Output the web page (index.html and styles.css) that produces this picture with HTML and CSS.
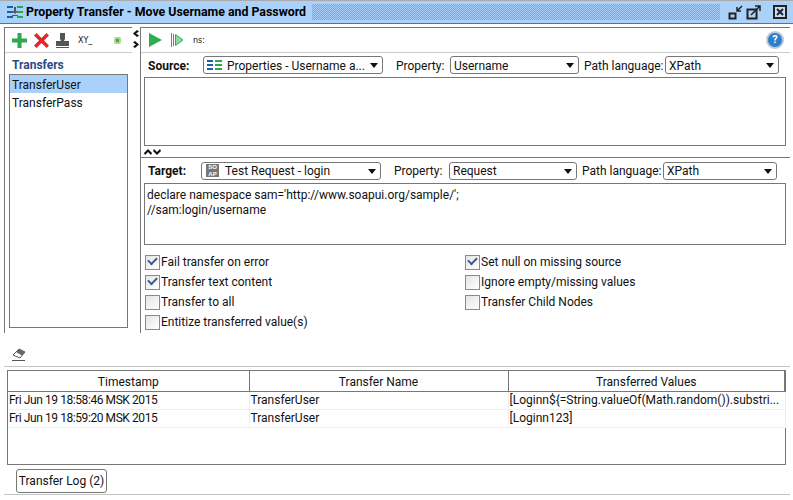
FILE: index.html
```html
<!DOCTYPE html>
<html>
<head>
<meta charset="utf-8">
<title>Property Transfer</title>
<link rel="stylesheet" href="styles.css">
</head>
<body>
<div class="app">
  <header class="titlebar">
    <svg class="ticon" width="16" height="13" viewBox="0 0 16 13"><path d="M0 0h6v2H0zM0 5h6v2H0zM0 10h6v2H0z" fill="#1f5fa8"/><path d="M10 0h6v2h-6zM10 5h6v2h-6zM10 10h6v2h-6z" fill="#2aa84a"/><path d="M7 1h2v4h2l-3 3-3-3h2zM5 9h6v1H5z" fill="#555"/></svg>
    <span class="ttext">Property Transfer - Move Username and Password</span>
    <span class="dither"></span>
    <svg class="wbtn" width="16" height="16" viewBox="0 0 16 16"><path d="M1.500 9.500h6v5h-6z" fill="none" stroke="#222" stroke-width="2"/><path d="M14 2L9 7M9 3v4h4" fill="none" stroke="#222" stroke-width="1.500"/></svg>
    <svg class="wbtn" width="16" height="16" viewBox="0 0 16 16"><path d="M1.500 5.500h9v9h-9z" fill="none" stroke="#222" stroke-width="2"/><path d="M5 11l9-9M9 2h5v5" fill="none" stroke="#222" stroke-width="1.500"/></svg>
    <svg class="wbtn wclose" width="14" height="14" viewBox="0 0 14 14"><rect x="1" y="1" width="12" height="12" fill="#c6ddf4" stroke="#222" stroke-width="2"/><path d="M4 4l6 6M10 4l-6 6" stroke="#223" stroke-width="2"/></svg>
  </header>
  <div class="rule-top"></div>
  <main class="main">
    <section class="left">
      <div class="ltool">
        <svg width="15" height="15" viewBox="0 0 15 15"><path d="M5.500 0h4v5.500H15v4H9.500V15h-4V9.500H0v-4h5.500z" fill="#2fa84f"/></svg>
        <svg width="15" height="15" viewBox="0 0 15 15"><path d="M0 2.500L2.500 0l5 5 5-5L15 2.500l-5 5 5 5-2.500 2.500-5-5-5 5L0 12.500l5-5z" fill="#e3262a"/></svg>
        <svg width="13" height="15" viewBox="0 0 13 15"><path d="M4 0h5v6l-1 2h5v5H0V8h5L4 6zM0 14h13v1H0z" fill="#555"/></svg>
        <span class="xy">XY_</span>
        <svg class="dot" width="7" height="7" viewBox="0 0 7 7"><rect width="7" height="7" rx="2" fill="#a5d88a"/><rect x="2" y="2" width="3" height="3" fill="#5aa05a"/></svg>
      </div>
      <div class="ltitle">Transfers</div>
      <ul class="list">
        <li class="sel">TransferUser</li>
        <li>TransferPass</li>
      </ul>
    </section>
    <div class="vsplit">
      <svg width="8" height="7" viewBox="0 0 8 7"><path d="M5 0l2 1.500L4 3.500l3 2L5 7 1 3.500z" fill="#111"/></svg>
      <svg class="v2" width="8" height="7" viewBox="0 0 8 7"><path d="M3 0L1 1.500l3 2-3 2L3 7l4-3.500z" fill="#111"/></svg>
    </div>
    <section class="right">
      <div class="rtool">
        <svg width="13" height="14" viewBox="0 0 13 14"><path d="M0 0l13 7-13 7z" fill="#2fae4e"/></svg>
        <svg class="run2" width="13" height="14" viewBox="0 0 13 14"><path d="M.5 0v14M2.500 1v12" stroke="#2fae4e" stroke-width="1"/><path d="M4.500 1.500l7.500 5.500-7.500 5.500z" fill="#8ed8a0" stroke="#2fae4e"/></svg>
        <span class="ns">ns:</span>
        <span class="help">?</span>
      </div>
      <div class="row row-s">
        <b class="lb lb-src">Source:</b>
        <div class="select s-src">
          <svg class="opt-ic" width="15" height="11" viewBox="0 0 15 11"><path d="M0 0h6v2H0zM0 4h6v2H0zM0 8h6v2H0z" fill="#1f5fa8"/><path d="M8 0h7v2H8zM8 4h7v2H8zM8 8h7v2H8z" fill="#2aa84a"/></svg>
          <span>Properties - Username a...</span><i></i>
        </div>
        <span class="lb lb-prop">Property:</span>
        <div class="select s-prop"><span>Username</span><i></i></div>
        <span class="lb lb-path">Path language:</span>
        <div class="select s-path"><span>XPath</span><i></i></div>
      </div>
      <div class="area a-src"></div>
      <div class="hsplit">
        <svg width="8" height="6" viewBox="0 0 8 6"><path d="M4 0l4 4-1 2-3-3-3 3-1-2z" fill="#111"/></svg>
        <svg width="8" height="6" viewBox="0 0 8 6"><path d="M4 6L0 2l1-2 3 3 3-3 1 2z" fill="#111"/></svg>
      </div>
      <div class="row row-t">
        <b class="lb lb-tgt">Target:</b>
        <div class="select s-tgt">
          <span class="soap">SO<br>AP</span>
          <span>Test Request - login</span><i></i>
        </div>
        <span class="lb lb-prop2">Property:</span>
        <div class="select s-prop2"><span>Request</span><i></i></div>
        <span class="lb lb-path">Path language:</span>
        <div class="select s-path"><span>XPath</span><i></i></div>
      </div>
      <div class="area a-tgt">declare namespace sam='http://www.soapui.org/sample/';<br>//sam:login/username</div>
      <div class="checks">
        <label class="chk on">Fail transfer on error</label>
        <label class="chk on">Set null on missing source</label>
        <label class="chk on">Transfer text content</label>
        <label class="chk">Ignore empty/missing values</label>
        <label class="chk">Transfer to all</label>
        <label class="chk">Transfer Child Nodes</label>
        <label class="chk">Entitize transferred value(s)</label>
      </div>
    </section>
  </main>
  <div class="logtool">
    <svg width="14" height="13" viewBox="0 0 14 13"><path d="M1 7l6-6 6 3-5 6z" fill="#fff" stroke="#555"/><path d="M7 1l6 3-3 3.500L4 4z" fill="#666"/><path d="M0 12.500h13" stroke="#555"/></svg>
  </div>
  <div class="tablewrap">
    <table>
      <colgroup><col class="c1"><col class="c2"><col class="c3"></colgroup>
      <thead><tr><th>Timestamp</th><th>Transfer Name</th><th>Transferred Values</th></tr></thead>
      <tbody>
        <tr><td class="ts">Fri Jun 19 18:58:46 MSK 2015</td><td>TransferUser</td><td>[Loginn${=String.valueOf(Math.random()).substri...</td></tr>
        <tr><td class="ts">Fri Jun 19 18:59:20 MSK 2015</td><td>TransferUser</td><td>[Loginn123]</td></tr>
      </tbody>
    </table>
  </div>
  <div class="tabs"><span class="tab">Transfer Log (2)</span></div>
</div>
</body>
</html>
```

FILE: styles.css
```css
* { box-sizing: border-box; }
html, body { margin: 0; padding: 0; }
body { background: #fff; color: #111; font-family: Roboto, "Noto Sans", sans-serif; font-size: 12px; overflow: hidden; }
.app { width: 793px; height: 500px; display: flex; flex-direction: column; overflow: hidden; border-top: 1px solid #aaa; }
.titlebar { height: 22px; flex: none; background: #a9d1fa; display: flex; align-items: center; padding: 0 3px 0 7px; }
.ticon { margin-right: 3px; }
.ttext { font-weight: 700; font-size: 12.350px; color: #000; white-space: nowrap; margin-right: 6px; }
.dither { flex: 1; height: 16px; margin-right: 6px; background: conic-gradient(#7fa3cf 25%, transparent 0 50%, #7fa3cf 0 75%, transparent 0) 0 0 / 2px 2px; }
.wbtn { margin-left: 2px; flex: none; }
.wclose { margin-left: 11px; margin-right: 3px; }
.rule-top { height: 4px; flex: none; border-top: 1px solid #6e6e6e; }
.main { height: 306px; flex: none; display: flex; padding-left: 4px; }
.left { width: 128px; flex: none; border-left: 1px solid #777; border-top: 1px solid #777; display: flex; flex-direction: column; }
.ltool { height: 25px; flex: none; display: flex; align-items: center; padding-left: 7px; gap: 7px; border-bottom: 1px solid #ccc; }
.xy { font-size: 8px; margin-left: 2px; width: 29px; font-family: "DejaVu Sans", sans-serif; }
.ltitle { height: 21px; flex: none; padding: 5px 0 0 7px; font-weight: 700; color: #2b4a86; font-size: 12px; }
.list { list-style: none; margin: 0 0 5px 4px; padding: 0; width: 119px; flex: 1; border: 1px solid #777; }
.list li { height: 18px; line-height: 18px; padding: 1px 0 0 2px; }
.list .sel { background: #a9d1fa; }
.vsplit { width: 8px; flex: none; display: flex; flex-direction: column; align-items: center; padding-top: 3px; }
.vsplit .v2 { margin-top: 4px; }
.right { width: 650px; flex: none; border-left: 1px solid #777; border-top: 1px solid #777; display: flex; flex-direction: column; }
.rtool { height: 25px; flex: none; display: flex; align-items: center; padding: 0 6px 0 8px; border-bottom: 1px solid #ccc; }
.run2 { margin-left: 9px; }
.ns { font-size: 8px; margin-left: 9px; font-family: "DejaVu Sans", sans-serif; flex: 1; }
.help { width: 18px; height: 18px; border-radius: 50%; background: #2d7fc9; border: 2px solid #b9c9da; color: #fff; font-weight: 700; font-size: 11px; line-height: 14px; text-align: center; }
.row { height: 24px; flex: none; display: flex; align-items: center; }
.row-t { height: 25px; }
.row-s .lb, .row-s .select span { padding-top: 2px; }
.lb { white-space: nowrap; flex: none; }
.lb-src { width: 55px; margin-left: 7px; }
.lb-tgt { width: 53px; margin-left: 7px; }
.lb-prop { width: 54px; margin-left: 13px; }
.lb-prop2 { width: 55px; margin-left: 13px; }
.lb-path { width: 81px; margin-left: 5px; }
.select { height: 18px; flex: none; position: relative; display: flex; align-items: center; padding-left: 3px; border: 1px solid #777; border-radius: 3px; background: #fff; white-space: nowrap; }
.select i { position: absolute; right: 4px; top: 6px; width: 0; height: 0; border: 4px solid transparent; border-top: 5px solid #111; border-bottom: 0; }
.s-src { width: 180px; }
.s-tgt { width: 180px; padding-left: 4px; }
.s-prop { width: 129px; }
.s-prop2 { width: 128px; }
.s-path { width: 114px; }
.opt-ic { margin-right: 5px; margin-top: 1px; }
.soap { width: 13px; height: 13px; background: #777; color: #fff; font-size: 6px; line-height: 6.500px; font-weight: 700; text-align: center; margin-right: 6px; font-family: "Liberation Sans", sans-serif; }
.area { margin-left: 3px; width: 642px; flex: none; border: 1px solid #777; background: #fff; padding: 4px 2px; line-height: 15px; }
.a-src { height: 69px; }
.a-tgt { height: 62px; padding-top: 4px; }
.hsplit { height: 12px; flex: none; display: flex; align-items: center; gap: 1px; padding-left: 3px; border-bottom: 1px solid #777; }
.checks { display: grid; grid-template-columns: 320px 1fr; grid-auto-rows: 20px; padding: 7px 0 0 4px; }
.chk { display: flex; align-items: center; white-space: nowrap; padding-left: 16px; position: relative; }
.chk::before { content: ""; position: absolute; left: 0; top: 3px; width: 13px; height: 13px; border: 1px solid #8a8a8a; background: linear-gradient(135deg, #e4e4e4, #fff); }
.chk.on::after { content: ""; position: absolute; left: 3px; top: 5px; width: 7px; height: 4px; border-left: 2px solid #3a5a96; border-bottom: 2px solid #3a5a96; transform: rotate(-45deg); }
.logtool { height: 34px; flex: none; padding: 15px 0 0 8px; border-bottom: 1px solid #c4c4c4; margin: 0 3px 0 4px; }
.tablewrap { margin: 3px 0 0 7px; width: 779px; height: 95px; flex: none; border: 1px solid #777; }
table { border-collapse: collapse; table-layout: fixed; width: 777px; }
.c1 { width: 241px; }
.c2 { width: 259px; }
.c3 { width: 277px; }
th { height: 20px; padding: 2px 0 0; font-weight: 400; text-align: center; border-right: 1px solid #777; border-bottom: 1px solid #777; }
th:last-child { border-right: 2px solid #777; }
td { height: 18px; padding: 0 0 0 1px; white-space: nowrap; overflow: hidden; border-right: 1px solid #eee; border-bottom: 1px solid #eee; }
td.ts { letter-spacing: -0.420px; }
.tabs { height: 30px; flex: none; margin: 0 3px 0 4px; padding: 4px 0 0 12px; border-bottom: 1px solid #c4c4c4; }
.tab { display: inline-block; width: 91px; height: 24px; line-height: 22px; text-align: center; border: 1px solid #777; border-radius: 3px; }
```
